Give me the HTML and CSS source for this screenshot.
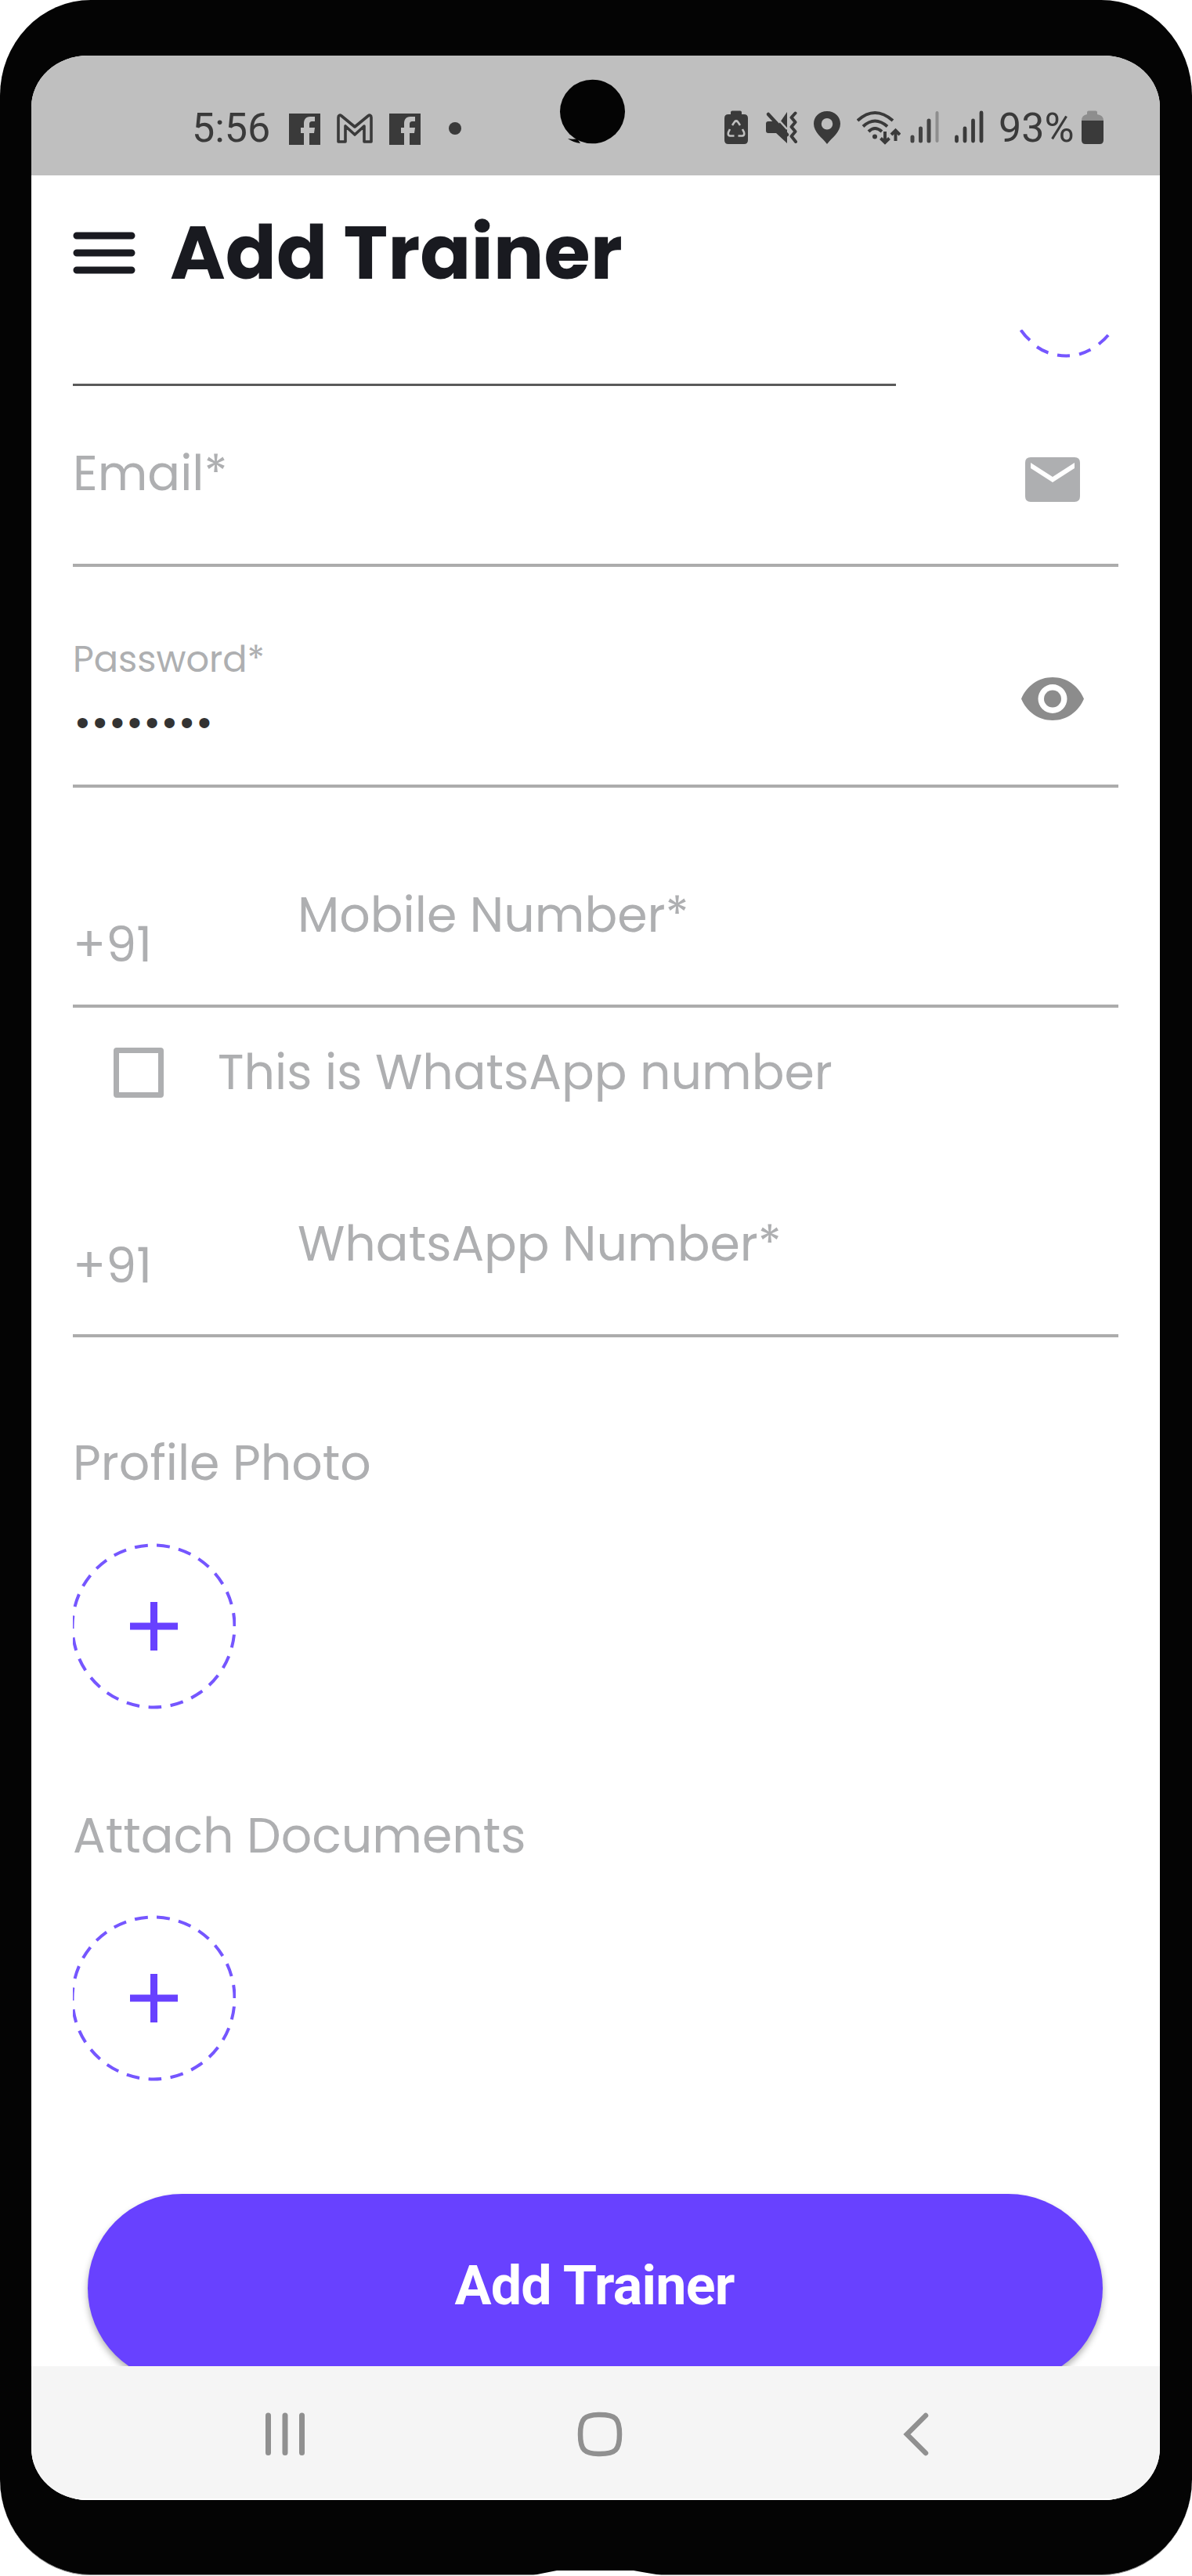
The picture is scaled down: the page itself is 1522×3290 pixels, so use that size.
FILE: index.html
```html
<!DOCTYPE html>
<html lang="en">
<head>
<meta charset="utf-8">
<title>Add Trainer</title>
<link rel="stylesheet" href="styles.css">
</head>
<body>
<div class="phone">
  <div class="screen">
    <header class="status">
      <span class="clock">5:56</span>
      <svg class="ic fb" viewBox="369 140 40 48"><path d="M369 145h40v40h-14v-15h6l1-7h-7v-4c0-3 1-4 4-4h3v-6h-6c-6 0-8 4-8 9v5h-4v7h4v15h-19z"/></svg>
      <svg class="ic gmail" viewBox="430 140 46 48"><path d="M432 150c0-3 2-3.500 4-2l17 14 17-14c2-1.500 4-1 4 2v31h-9v-20l-12 11-12-11v20h-9z" fill="none" stroke="#3a3a3a" stroke-width="3.600" stroke-linejoin="round"/></svg>
      <svg class="ic fb2" viewBox="369 140 40 48"><path d="M369 145h40v40h-14v-15h6l1-7h-7v-4c0-3 1-4 4-4h3v-6h-6c-6 0-8 4-8 9v5h-4v7h4v15h-19z"/></svg>
      <svg class="ic dot" viewBox="573 140 16 48"><circle cx="581" cy="164" r="8"/></svg>
      <svg class="ic saver" viewBox="925 140 30 48"><path d="M933 146v-2.500q0-2 2-2h10q2 0 2 2v2.500h3q5 0 5 5v28q0 5-5 5h-20q-5 0-5-5v-28q0-5 5-5z"/><g fill="none" stroke="#bfbfbf" stroke-width="2.600"><path d="M935 160l3-4.500q2-2 4 0l3 4.500M932 165l-2 4q-1 4 2 4.500h5.500M948 165l2 4q1 4-2 4.500h-5.500"/></g></svg>
      <svg class="ic mute" viewBox="977 140 41 48"><path d="M1005 143v29l-11-13zM978 158q0-3 3-3h6l18 18v10l-14-13h-10q-3 0-3-3z"/><path d="M981 146l24 26" stroke="#3a3a3a" stroke-width="4.500" stroke-linecap="round"/><path d="M986 144l19 21" stroke="#bfbfbf" stroke-width="2.500"/><path d="M1015.500 144.500l-5 5.500 5 6-5 6 5 6-5 6 5.500 7" fill="none" stroke="#3a3a3a" stroke-width="4" stroke-linejoin="round" stroke-linecap="round"/></svg>
      <svg class="ic pin" viewBox="1039 140 34 48"><path fill-rule="evenodd" d="M1056 142c-10 0-17 7-17 16 0 11 11 18 17 26 6-8 17-15 17-26 0-9-7-16-17-16zm0 9a7 7 0 1 1 0 14.500a7 7 0 1 1 0-14.500z"/></svg>
      <svg class="ic wifi" viewBox="1094 140 56 48"><g fill="none" stroke="#3a3a3a" stroke-width="4"><path d="M1095 154q22-20 45 0M1102 161.500q15-14 31 0M1109 168q8-8 17 0"/><path d="M1130 168v13M1124.500 176.500l5.500 5.500 5.500-5.500M1143.500 180v-13M1138 172l5.500-5.500 5.500 5.500"/></g><circle cx="1117" cy="174.500" r="3"/></svg>
      <svg class="ic sim1" viewBox="1162 140 38 48"><path d="M1165 175v5M1175.500 164v16M1186 154v26" stroke="#444" stroke-width="5" stroke-linecap="round"/><path d="M1196.500 144v36" stroke="#8e8e8e" stroke-width="4" stroke-linecap="round"/></svg>
      <svg class="ic sim2" viewBox="1219 140 38 48"><path d="M1221.500 175v5M1232 164v16M1242.500 154v26M1253 144v36" stroke="#3a3a3a" stroke-width="4.800" stroke-linecap="round"/></svg>
      <span class="percent">93%</span>
      <svg class="ic batt" viewBox="1381 140 28 48"><path fill="#8e8e8e" d="M1388 146v-2.500q0-2 2-2h9q2 0 2 2v2.500q8 1 8 8h-28q0-7 7-8z"/><path d="M1381 154h28v25q0 5-5 5h-18q-5 0-5-5z"/></svg>
    </header>

    <div class="appbar">
      <svg class="burger" viewBox="0 0 80 54"><path d="M5 5h70M5 27h70M5 49h70" stroke="#191a20" stroke-width="9" stroke-linecap="round"/></svg>
      <h1 class="title">Add Trainer</h1>
    </div>

    <main class="form">
      <div class="row name-row">
        <div class="name-field"></div>
        <svg class="arc" viewBox="1294 421 134 36"><path d="M1303.500 421.500Q1309 429.500 1315 434.500M1324 443Q1331 448 1338.500 450.500M1350 453.500Q1358 454.800 1366 454.300M1378 452.500Q1386 450 1392.500 446.500M1403 439.500Q1410 434 1415 428" fill="none" stroke="#7556ff" stroke-width="4"/></svg>
      </div>
      <div class="row email-row">
        <label class="label">Email*</label>
        <svg class="mail" viewBox="0 0 70 57"><path fill-rule="evenodd" d="M7 0h56q7 0 7 7v43q0 7-7 7h-56q-7 0-7-7v-43q0-7 7-7zM7 7v7l28 18 28-18v-7l-28 18z"/></svg>
      </div>
      <div class="row pass-row">
        <div class="pass">
          <label class="label small">Password*</label>
          <div class="secret">••••••••</div>
        </div>
        <svg class="eye" viewBox="0 0 80 55"><path fill-rule="evenodd" d="M40 0c18 0 33 11 40 27.500C73 44 58 55 40 55S7 44 0 27.500C7 11 22 0 40 0zm0 9a18.500 18.500 0 1 0 0 37a18.500 18.500 0 1 0 0-37z"/><circle cx="40" cy="27.500" r="11"/></svg>
      </div>
      <div class="row phone-row">
        <span class="code">+91</span>
        <label class="label">Mobile Number*</label>
      </div>
      <div class="check-row">
        <span class="box"></span>
        <label class="label">This is WhatsApp number</label>
      </div>
      <div class="row phone-row wa-row">
        <span class="code">+91</span>
        <label class="label">WhatsApp Number*</label>
      </div>
      <div class="upload">
        <div class="label">Profile Photo</div>
        <svg class="add" viewBox="0 0 208 214"><circle cx="103" cy="107" r="103.500"/><path d="M73 107h61M103.500 76v62"/></svg>
      </div>
      <div class="upload docs">
        <div class="label">Attach Documents</div>
        <svg class="add" viewBox="0 0 208 214"><circle cx="103" cy="107" r="103.500"/><path d="M73 107h61M103.500 76v62"/></svg>
      </div>
      <button class="submit">Add Trainer</button>
    </main>

    <nav class="nav">
      <svg class="recents" viewBox="339 3076 50 66"><path d="M342.500 3085v47.500M364 3085v47.500M385.500 3085v47.500" stroke="#909090" stroke-width="7" stroke-linecap="round"/></svg>
      <svg class="home" viewBox="737 3076 58 66"><path d="M766 3084c20 0 25 5 25 25s-5 25-25 25-25-5-25-25 5-25 25-25z" fill="none" stroke="#909090" stroke-width="6.500"/></svg>
      <svg class="back" viewBox="1153 3076 34 66"><path d="M1182 3085l-24 24 24 24" fill="none" stroke="#909090" stroke-width="6.500" stroke-linecap="round"/></svg>
    </nav>
  </div>
  <svg class="camera" viewBox="714 101 86 84"><ellipse cx="756.500" cy="142.500" rx="41.500" ry="40.800"/><path d="M725 177q7 1.500 12 0l4 6q-9-1-16-6z"/></svg>
  <svg class="lip" viewBox="0 0 178 7"><path d="M0 7h3Q20 3.500 38 0h98Q155 3.500 178 7z" fill="#fff"/></svg>
</div>
</body>
</html>
```
FILE: styles.css
```css
* { box-sizing: border-box; margin: 0; padding: 0; }
body { background: #fff; width: 1522px; height: 3290px; overflow: hidden; font-family: Poppins, Inter, sans-serif; }
svg { display: block; flex: none; }

.phone { position: relative; width: 1522px; height: 3289px; padding: 71px 41px 96px 40px; background: #040404; border-radius: 116px / 122px; border-bottom: 1px solid #8a8a8a; }
.screen { display: flex; flex-direction: column; width: 1441px; height: 3122px; background: #fff; border-radius: 72px / 66px; overflow: hidden; }
.camera { position: absolute; left: 714px; top: 101px; width: 86px; height: 84px; fill: #040404; }
.lip { position: absolute; left: 673px; top: 3283px; width: 178px; height: 7px; }

/* status bar */
.status { display: flex; align-items: center; flex: none; height: 153px; padding: 33px 0 0 205px; background: #bfbfbf; color: #3a3a3a; font: 400 52px/60px Roboto, sans-serif; }
.ic { height: 48px; fill: #3a3a3a; }
.clock { width: 100px; }
.fb { width: 40px; margin-left: 24px; }
.gmail { width: 46px; margin-left: 21px; }
.fb2 { width: 40px; margin-left: 21px; }
.dot { width: 16px; margin-left: 36px; }
.saver { width: 30px; margin-left: 336px; }
.mute { width: 41px; margin-left: 22px; }
.pin { width: 34px; margin-left: 21px; }
.wifi { width: 56px; margin-left: 21px; }
.sim1 { width: 38px; margin-left: 12px; }
.sim2 { width: 38px; margin-left: 19px; }
.percent { width: 97px; margin-left: 18px; }
.batt { width: 28px; margin-left: 9px; }

/* title bar */
.appbar { display: flex; align-items: center; flex: none; height: 197px; padding-left: 53px; }
.burger { width: 80px; height: 54px; }
.title { margin-left: 44px; font-size: 96px; line-height: 110px; font-weight: 700; color: #191a20; white-space: nowrap; }

/* form */
.form { flex: none; height: 2601px; padding: 0 53px; overflow: hidden; }
.row { display: flex; justify-content: space-between; align-items: flex-start; border-bottom: 4px solid #acacac; }
.label, .code { display: block; color: #aeafb1; font-size: 61.800px; line-height: 60px; white-space: nowrap; }
.label.small { font-size: 46.300px; line-height: 50px; }

.name-row { height: 72px; border: 0; }
.name-field { width: 1051px; height: 72px; border-bottom: 3px solid #5a5a5a; }
.arc { width: 134px; height: 36px; }
.email-row { height: 231px; padding: 82px 49px 0 0; }
.mail { width: 70px; height: 57px; margin-top: 9px; fill: #aeafb1; }
.pass-row { height: 282px; padding: 93px 44px 0 0; }
.secret { margin: 29px 0 0 4px; font: 400 48px/54px "Liberation Sans", sans-serif; letter-spacing: 5.400px; color: #333; }
.eye { width: 80px; height: 55px; margin-top: 48px; fill: #8c8c8c; }
.phone-row { height: 281px; padding-top: 133px; justify-content: flex-start; }
.code { width: 287px; margin-top: 38px; }
.check-row { display: flex; align-items: center; height: 165px; padding-left: 52px; }
.box { width: 64px; height: 64px; border: 7px solid #aeafb1; border-radius: 4px; }
.check-row .label { margin-left: 69px; }
.wa-row { height: 256px; padding-top: 107px; }
.wa-row .code { margin-top: 28px; }
.upload { height: 476px; padding-top: 131px; }
.upload .add { margin-top: 71px; }
.docs .add { margin-top: 70px; }
.add { width: 208px; height: 214px; fill: none; stroke: #6841ff; }
.add circle { stroke-width: 4px; stroke: #7556ff; stroke-dasharray: 16.800 11.470; stroke-dashoffset: -10.800; }
.add path { stroke-width: 9px; }
.submit { display: block; width: 1296px; height: 241px; margin: 142px 0 0 19px; border: 0; border-radius: 121px; background: #6841ff; box-shadow: 0 5px 9px rgba(0, 0, 0, .3); color: #fff; font: 700 70px/80px Roboto, sans-serif; letter-spacing: -.780px; padding: 0 2px 7px 0; }

/* navigation */
.nav { display: flex; align-items: center; flex: none; height: 171px; padding-left: 299px; background: #f5f5f5; border-bottom: 2px solid #fff; padding-top: 5px; }
.recents { width: 50px; height: 66px; }
.home { width: 58px; height: 66px; margin-left: 348px; }
.back { width: 34px; height: 66px; margin-left: 358px; }
```
